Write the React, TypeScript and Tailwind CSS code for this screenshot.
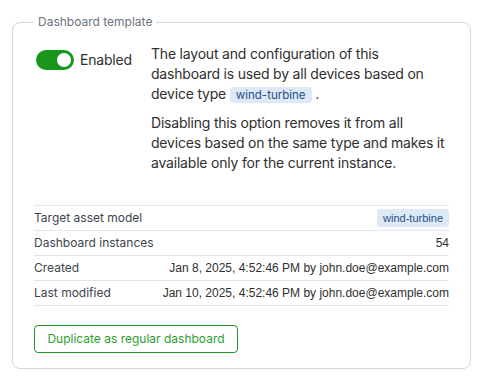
const rows: { label: string; value: string; badge?: boolean }[] = [
  { label: "Target asset model", value: "wind-turbine", badge: true },
  { label: "Dashboard instances", value: "54" },
  { label: "Created", value: "Jan 8, 2025, 4:52:46 PM by john.doe@example.com" },
  { label: "Last modified", value: "Jan 10, 2025, 4:52:46 PM by john.doe@example.com" },
];

function Toggle({ on }: { on: boolean }) {
  return (
    <button
      className={
        "relative inline-flex h-[20px] w-[38px] shrink-0 items-center rounded-full " +
        (on ? "bg-[#19961c]" : "bg-gray-300")
      }
    >
      <span className="absolute right-[3px] h-[14px] w-[14px] rounded-full bg-white" />
    </button>
  );
}

export default function App() {
  return (
    <div className="bg-white pl-3 pt-[14px] font-['Inter','Noto_Sans',sans-serif] text-[#2f2f2f]">
      <fieldset className="w-[459px] rounded-lg border border-[#d4d7dc] px-[21px] pb-[15px]">
        <legend className="px-1 text-[12px] leading-4 text-[#6b7280]">Dashboard template</legend>

        {/* Top: toggle + description */}
        <div className="mt-[14px] flex">
          <div className="mt-[6px] flex w-[117px] shrink-0 items-start gap-[6px] pl-[2px]">
            <Toggle on />
            <span className="text-[14px] leading-5 tracking-[-0.2px]">Enabled</span>
          </div>
          <div className="flex flex-col gap-2 text-[14px] leading-5 tracking-[-0.2px]">
            <p>
              The layout and configuration of this dashboard is used by all devices based on
              device type{" "}
              <span className="rounded-[3px] bg-[#dde9f7] px-[6px] py-[1px] text-[11.5px] tracking-normal text-[#254f86]">
                wind-turbine
              </span>{" "}
              .
            </p>
            <p>
              Disabling this option removes it from all devices based on the same type and makes it
              available only for the current instance.
            </p>
          </div>
        </div>

        {/* Properties */}
        <div className="mt-[32px] border-t border-[#e3e5e8]">
          {rows.map((r) => (
            <div
              key={r.label}
              className="flex h-[25px] items-center justify-between border-b border-[#e3e5e8] text-[12px]"
            >
              <span className="text-[#3d4450]">{r.label}</span>
              {r.badge ? (
                <span className="rounded-[3px] bg-[#dde9f7] px-[6px] py-[1px] font-['Liberation_Sans',sans-serif] text-[11px] text-[#254f86]">
                  {r.value}
                </span>
              ) : (
                <span className="font-['Liberation_Sans',sans-serif] text-[#2f2f2f]">{r.value}</span>
              )}
            </div>
          ))}
        </div>

        <button className="mt-[19px] h-[28px] w-[204px] rounded-[4px] border border-[#1e9a22] text-[12px] text-[#2b9f2e]">
          Duplicate as regular dashboard
        </button>
      </fieldset>
    </div>
  );
}
